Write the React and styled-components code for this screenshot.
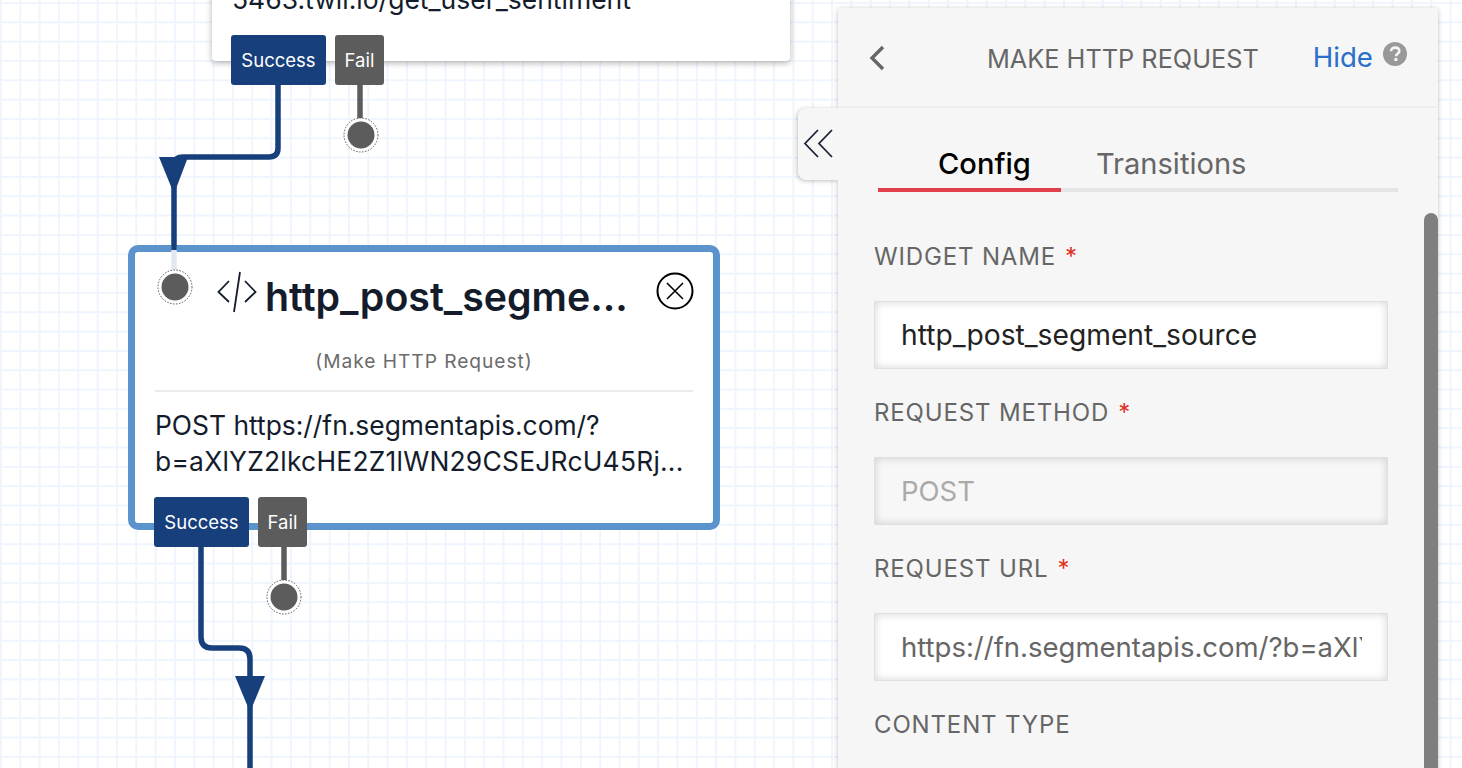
import React from "react";
import styled, { createGlobalStyle } from "styled-components";

const GlobalStyle = createGlobalStyle`
  html, body {
    margin: 0;
    height: 100%;
    overflow: hidden;
    background: #fff;
  }
  * {
    box-sizing: border-box;
  }
`;

const Canvas = styled.div`
  position: relative;
  width: 1462px;
  height: 768px;
  overflow: hidden;
  font-family: Inter, "Liberation Sans", sans-serif;
  background-color: #fff;
  background-image:
    linear-gradient(#eef5fe 2px, transparent 2px),
    linear-gradient(90deg, #eef5fe 2px, transparent 2px);
  background-size: 19.33px 19.33px;
  background-position: 0 2px;
`;

const Wires = styled.svg`
  position: absolute;
  left: 0;
  top: 0;
  z-index: 3;
  pointer-events: none;
`;

const PrevCard = styled.div`
  position: absolute;
  left: 212px;
  top: -40px;
  width: 578px;
  height: 101px;
  padding: 21px 20px 0;
  background: #fff;
  border-radius: 4px;
  box-shadow: 0 2px 6px rgba(0, 0, 0, 0.3);
  font-size: 26.5px;
  line-height: 36px;
  color: #141c2c;
`;

const NodeCard = styled.div`
  position: absolute;
  left: 128px;
  top: 245px;
  width: 592px;
  height: 285px;
  padding: 0 20px;
  background: #fff;
  border: 7px solid #5b94cd;
  border-radius: 10px;
  color: #141c2c;
`;

const TitleRow = styled.div`
  display: flex;
  align-items: center;
  height: 80px;
  padding-left: 62px;
`;

const CodeIcon = styled.svg`
  flex: none;
`;

const TitleText = styled.div`
  margin-left: 8px;
  margin-top: 9px;
  width: 362px;
  font-size: 39.3px;
  font-weight: 600;
  line-height: 46px;
  white-space: nowrap;
`;

const CloseIcon = styled.svg`
  flex: none;
  margin-left: 29px;
  margin-top: -2px;
`;

const Subtitle = styled.div`
  margin-top: 15px;
  font-size: 19.2px;
  line-height: 28px;
  letter-spacing: 0.95px;
  text-align: center;
  color: #6b6b6b;
`;

const Divider = styled.div`
  margin-top: 15px;
  height: 2px;
  background: #ebebeb;
`;

const NodeBody = styled.div`
  margin-top: 15px;
  font-size: 26.4px;
  line-height: 36px;
  white-space: nowrap;
`;

const WideLine = styled.span`
  letter-spacing: 0.24px;
`;

const Outlets = styled.div`
  position: absolute;
  left: ${(p) => p.$x}px;
  top: ${(p) => p.$y}px;
  display: flex;
  gap: 9px;
  z-index: 4;
`;

const Outlet = styled.div`
  height: 50px;
  width: ${(p) => p.$w}px;
  display: flex;
  align-items: center;
  justify-content: center;
  border-radius: 3px;
  font-size: 18.5px;
  color: #fff;
  background: ${(p) => (p.$fail ? "#5c5c5c" : "#173f7c")};
`;

const Panel = styled.aside`
  position: absolute;
  left: 838px;
  top: 8px;
  width: 600px;
  height: 790px;
  background: #f6f6f6;
  border-radius: 3px 3px 0 0;
  box-shadow: 0 1px 5px rgba(0, 0, 0, 0.25);
  z-index: 5;
`;

const PanelHeader = styled.header`
  display: flex;
  align-items: center;
  height: 100px;
  border-bottom: 2px solid #eeeeee;
  padding: 2px 30px 0 30px;
`;

const BackIcon = styled.svg`
  flex: none;
`;

const PanelTitle = styled.div`
  margin-left: 101px;
  font-size: 25.3px;
  color: #666;
  white-space: nowrap;
`;

const HideLink = styled.a`
  margin-left: 54px;
  margin-top: -2px;
  font-size: 27.6px;
  color: #2a6fc9;
`;

const HelpIcon = styled.svg`
  flex: none;
  margin-left: 10px;
  margin-top: -8px;
`;

const CollapseTab = styled.div`
  position: absolute;
  left: -40px;
  top: 100px;
  width: 40px;
  height: 72px;
  display: flex;
  align-items: center;
  justify-content: center;
  background: #f6f6f6;
  border-radius: 8px 0 0 8px;
  box-shadow: -1px 1px 4px rgba(0, 0, 0, 0.25);
  clip-path: inset(-8px 0 -8px -8px);
`;

const Tabs = styled.div`
  display: flex;
  margin: 32px 40px 0;
  border-bottom: 4px solid #e5e5e5;
  height: 52px;
`;

const Tab = styled.div`
  height: 52px;
  padding: 0 ${(p) => p.$right}px 0 ${(p) => p.$left}px;
  font-size: 29.1px;
  line-height: 48px;
  font-weight: ${(p) => (p.$active ? 500 : 400)};
  color: ${(p) => (p.$active ? "#000" : "#666")};
  border-bottom: 4px solid ${(p) => (p.$active ? "#e0404c" : "transparent")};
`;

const Form = styled.div`
  padding: 44px 50px 0 36px;
`;

const Label = styled.div`
  height: 40px;
  font-size: 24px;
  line-height: 42px;
  letter-spacing: 0.85px;
  color: #666;
  white-space: nowrap;
`;

const Star = styled.span`
  margin-left: 9px;
  color: #e0301e;
`;

const Field = styled.div`
  height: 68px;
  margin: 25px 0 23px;
  padding: 0 25px 0 26px;
  display: flex;
  align-items: center;
  font-size: ${(p) => p.$size}px;
  white-space: nowrap;
  overflow: hidden;
  background: ${(p) => (p.$disabled ? "#f7f7f7" : "#fff")};
  color: ${(p) => (p.$disabled ? "#aaa" : p.$muted ? "#666" : "#222")};
  box-shadow: inset 0 0 8px rgba(0, 0, 0, 0.17);
  border: 1px solid #e0e0e0;
`;

const FieldText = styled.span`
  overflow: hidden;
  display: block;
  width: 100%;
`;

const ScrollThumb = styled.div`
  position: absolute;
  right: 0;
  top: 205px;
  bottom: 0;
  width: 14px;
  border-radius: 7px 7px 0 0;
  background: #7f7f7f;
`;

const Dot = ({ cx, cy }) => (
  <g>
    <circle cx={cx} cy={cy} r="17" fill="#fff" stroke="#555" strokeWidth="1" strokeDasharray="1.5 1.5" />
    <circle cx={cx} cy={cy} r="13.5" fill="#5c5c5c" />
  </g>
);

export default function App() {
  return (
    <Canvas>
      <GlobalStyle />
      <PrevCard>5463.twil.io/get_user_sentiment</PrevCard>
      <Outlets $x={231} $y={35}>
        <Outlet $w={95}>Success</Outlet>
        <Outlet $w={49} $fail>Fail</Outlet>
      </Outlets>

      <NodeCard>
        <TitleRow>
          <CodeIcon width="40" height="42" viewBox="0 0 40 42" fill="none" stroke="#141c2c" strokeWidth="1.8">
            <path d="M12 10 L1.5 21 L12 31" />
            <path d="M28 10 L38.5 21 L28 31" />
            <path d="M23 1 L17 41" />
          </CodeIcon>
          <TitleText>http_post_segme...</TitleText>
          <CloseIcon width="38" height="38" viewBox="0 0 38 38" fill="none" stroke="#000" strokeWidth="2">
            <circle cx="19" cy="19" r="17.5" />
            <path d="M11 11 L27 27 M27 11 L11 27" strokeWidth="1.6" />
          </CloseIcon>
        </TitleRow>
        <Subtitle>(Make HTTP Request)</Subtitle>
        <Divider />
        <NodeBody>
          POST https://fn.segmentapis.com/?
          <br />
          <WideLine>b=aXlYZ2lkcHE2Z1lWN29CSEJRcU45Rj...</WideLine>
        </NodeBody>
      </NodeCard>
      <Outlets $x={154} $y={497}>
        <Outlet $w={95}>Success</Outlet>
        <Outlet $w={49} $fail>Fail</Outlet>
      </Outlets>

      <Wires width="1462" height="768" viewBox="0 0 1462 768" fill="none">
        <path d="M174 246 V272" stroke="#e2e7f0" strokeWidth="5.5" />
        <path d="M278 85 V148 Q278 157 269 157 H183 Q174 157 174 166 V250" stroke="#173f7c" strokeWidth="5.5" />
        <path d="M159 157 H188 L174 194 Z" fill="#173f7c" />
        <path d="M360 85 V125" stroke="#5c5c5c" strokeWidth="5.5" />
        <Dot cx={361} cy={135} />
        <Dot cx={175} cy={287} />
        <path d="M201 547 V637 Q201 648 212 648 H239 Q250 648 250 659 V768" stroke="#173f7c" strokeWidth="5.5" />
        <path d="M235 676 H265 L250 712 Z" fill="#173f7c" />
        <path d="M284 547 V587" stroke="#5c5c5c" strokeWidth="5.5" />
        <Dot cx={284} cy={597} />
      </Wires>

      <Panel>
        <CollapseTab>
          <svg width="30" height="30" viewBox="0 0 30 30" fill="none" stroke="#1b2436" strokeWidth="1.8">
            <path d="M15 1 L2 14.5 L15 28" />
            <path d="M29 1 L16 14.5 L29 28" />
          </svg>
        </CollapseTab>
        <PanelHeader>
          <BackIcon width="18" height="26" viewBox="0 0 18 26" fill="none" stroke="#666" strokeWidth="3.4">
            <path d="M15 2 L4 13 L15 24" />
          </BackIcon>
          <PanelTitle>MAKE HTTP REQUEST</PanelTitle>
          <HideLink>Hide</HideLink>
          <HelpIcon width="24" height="24" viewBox="0 0 24 24">
            <circle cx="12" cy="12" r="12" fill="#999" />
            <path d="M8 9.2 C8 6.8 10 5.6 12.2 5.6 C14.6 5.6 16.3 7 16.3 9 C16.3 11.8 13 11.6 13 14.2" fill="none" stroke="#f5f5f5" strokeWidth="2.6" />
            <rect x="11.4" y="16" width="3" height="3" fill="#f5f5f5" />
          </HelpIcon>
        </PanelHeader>
        <Tabs>
          <Tab $active $left={60} $right={30}>Config</Tab>
          <Tab $left={35} $right={0}>Transitions</Tab>
        </Tabs>
        <Form>
          <Label>WIDGET NAME<Star>*</Star></Label>
          <Field $size={28.2}>http_post_segment_source</Field>
          <Label>REQUEST METHOD<Star>*</Star></Label>
          <Field $disabled $size={27.5}>POST</Field>
          <Label>REQUEST URL<Star>*</Star></Label>
          <Field $muted $size={27.5}><FieldText>https://fn.segmentapis.com/?b=aXlYZ2lkcHE2Z1lWN29CSEJRcU45RjZsZ3JhdGlvbg</FieldText></Field>
          <Label>CONTENT TYPE</Label>
        </Form>
        <ScrollThumb />
      </Panel>
    </Canvas>
  );
}
